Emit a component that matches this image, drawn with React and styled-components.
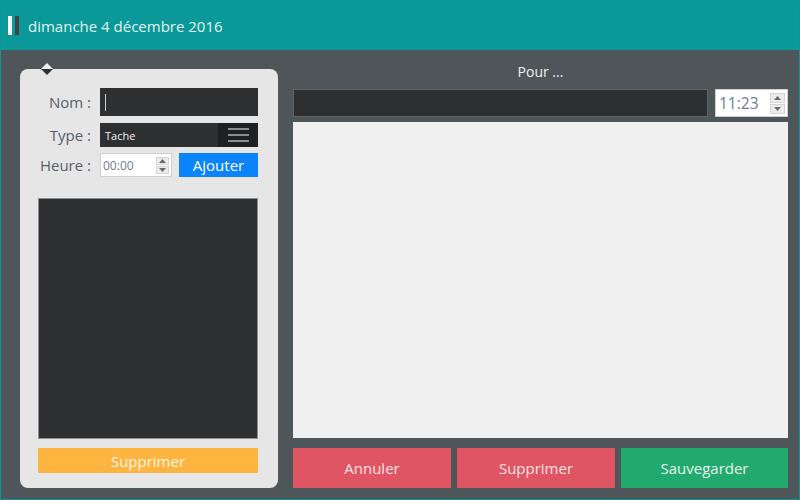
import React from "react";
import styled, { createGlobalStyle } from "styled-components";

const Global = createGlobalStyle`
  html, body { margin: 0; padding: 0; background: #4e5659; }
  * { box-sizing: border-box; }
  body { font-family: "Open Sans", "Noto Sans", sans-serif; }
`;

const Window = styled.div`
  width: 800px;
  height: 500px;
  border: 1px solid #0a9696;
  background: #4e5659;
  display: flex;
  flex-direction: column;
  overflow: hidden;
`;

const Header = styled.header`
  height: 49px;
  flex: none;
  background: #0a9898;
  display: flex;
  align-items: center;
  padding-left: 7px;
  gap: 4px;
  color: #e2f3f2;
  font-size: 15px;
`;

const Bars = styled.div`
  display: flex;
  gap: 3px;
  margin-right: 5px;
  margin-top: -1px;
`;

const Bar = styled.span`
  width: 4px;
  height: 19px;
  background: ${(p) => p.$c};
`;

const Main = styled.main`
  flex: 1;
  display: flex;
  gap: 15px;
  padding: 12px 11px 11px 19px;
  min-height: 0;
`;

const Panel = styled.section`
  position: relative;
  width: 258px;
  flex: none;
  margin-top: 7px;
  background: #e6e6e6;
  border-radius: 8px;
  padding: 19px 20px 15px 18px;
  display: flex;
  flex-direction: column;
`;

const Pointer = styled.svg`
  position: absolute;
  left: 20px;
  top: -7px;
`;

const Form = styled.div`
  display: grid;
  grid-template-columns: 53px 1fr;
  column-gap: 9px;
  row-gap: 6px;
  align-items: center;
`;

const Label = styled.label`
  text-align: right;
  font-size: 15px;
  color: #575e66;
  white-space: nowrap;
  line-height: 20px;
  margin-top: ${(p) => p.$mt || 0}px;
`;

const DarkInput = styled.div`
  height: ${(p) => p.$h}px;
  background: #2d2f31;
  border: ${(p) => (p.$border ? "1px solid #5f6568" : "none")};
  display: flex;
  align-items: center;
  padding-left: 5px;
`;

const Caret = styled.span`
  width: 1px;
  height: 17px;
  background: #cfcfcf;
`;

const Select = styled.div`
  height: 24px;
  margin-top: 1px;
  background: #2d2f31;
  display: flex;
  align-items: stretch;
`;

const SelectText = styled.span`
  flex: 1;
  font-size: 11px;
  color: #f2f2f2;
  padding-left: 5px;
  display: flex;
  align-items: center;
`;

const SelectBtn = styled.span`
  width: 40px;
  background: #1f2022;
  display: flex;
  flex-direction: column;
  justify-content: center;
  align-items: center;
  gap: 4px;
`;

const Line = styled.span`
  width: 21px;
  height: 2px;
  background: #8c8c8c;
`;

const HourRow = styled.div`
  display: flex;
  gap: 7px;
`;

const TimeBox = styled.div`
  width: ${(p) => p.$w}px;
  height: ${(p) => p.$h}px;
  background: #fff;
  border: 1px solid #cfcfcf;
  display: flex;
  align-items: center;
  justify-content: space-between;
  padding: 0 2px 0 ${(p) => p.$pl}px;
  font-size: ${(p) => p.$fs}px;
  color: #6b7c90;
`;

const Spin = styled.div`
  display: flex;
  flex-direction: column;
  gap: 1px;
`;

const SpinBtn = styled.span`
  width: ${(p) => p.$w}px;
  height: ${(p) => p.$h}px;
  background: #ececec;
  border: 1px solid #d4d4d4;
  display: flex;
  align-items: center;
  justify-content: center;
`;

const Button = styled.button`
  border: none;
  margin: 0;
  padding: 0;
  font-family: inherit;
  font-size: 15px;
  background: ${(p) => p.$bg};
  color: ${(p) => p.$fg};
  height: ${(p) => p.$h}px;
  width: ${(p) => (p.$w ? `${p.$w}px` : "auto")};
  display: flex;
  align-items: center;
  justify-content: center;
`;

const List = styled.div`
  flex: 1;
  margin-top: 21px;
  margin-bottom: 9px;
  background: #2d2f31;
  border: 1px solid #8e8e8e;
`;

const Right = styled.section`
  flex: 1;
  display: flex;
  flex-direction: column;
  min-width: 0;
`;

const Title = styled.div`
  height: 20px;
  line-height: 20px;
  text-align: center;
  font-size: 14px;
  color: #f0f0f0;
  margin-bottom: 7px;
`;

const TopRow = styled.div`
  display: flex;
  gap: 7px;
  height: 28px;
`;

const Grow = styled.div`
  flex: 1;
`;

const TextArea = styled.div`
  flex: 1;
  margin: 5px 0 10px;
  background: #f0f0f0;
`;

const Actions = styled.div`
  display: grid;
  grid-template-columns: 158px 158px 1fr;
  gap: 6px;
`;

const Arrow = ({ up }) => (
  <svg width="7" height="4" viewBox="0 0 7 4">
    <path d={up ? "M0 4 L3.5 0 L7 4 Z" : "M0 0 L3.5 4 L7 0 Z"} fill="#6a6a6a" />
  </svg>
);

export default function App() {
  return (
    <>
      <Global />
      <Window>
        <Header>
          <Bars>
            <Bar $c="#f4f4f4" />
            <Bar $c="#3e4548" />
          </Bars>
          dimanche 4 décembre 2016
        </Header>
        <Main>
          <Panel>
            <Pointer width="14" height="14" viewBox="0 0 14 14">
              <path d="M1 7 L7 1 L13 7 Z" fill="#f0f0f0" />
              <path d="M1 7 L7 13 L13 7 Z" fill="#2f3234" />
            </Pointer>
            <Form>
              <Label>Nom :</Label>
              <DarkInput $h={28}>
                <Caret />
              </DarkInput>
              <Label $mt={1}>Type :</Label>
              <Select>
                <SelectText>Tache</SelectText>
                <SelectBtn>
                  <Line />
                  <Line />
                  <Line />
                </SelectBtn>
              </Select>
              <Label>Heure :</Label>
              <HourRow>
                <TimeBox $w={72} $h={24} $pl={2} $fs={12}>
                  00:00
                  <Spin>
                    <SpinBtn $w={13} $h={8}>
                      <Arrow up />
                    </SpinBtn>
                    <SpinBtn $w={13} $h={8}>
                      <Arrow />
                    </SpinBtn>
                  </Spin>
                </TimeBox>
                <Button $bg="#0a84fb" $fg="#ffffff" $h={24} $w={79}>
                  Ajouter
                </Button>
              </HourRow>
            </Form>
            <List />
            <Button $bg="#feb540" $fg="#fff6e6" $h={25}>
              Supprimer
            </Button>
          </Panel>
          <Right>
            <Title>Pour ...</Title>
            <TopRow>
              <Grow>
                <DarkInput $h={28} $border />
              </Grow>
              <TimeBox $w={73} $h={28} $pl={3} $fs={15.5}>
                11:23
                <Spin>
                  <SpinBtn $w={15} $h={10}>
                    <Arrow up />
                  </SpinBtn>
                  <SpinBtn $w={15} $h={10}>
                    <Arrow />
                  </SpinBtn>
                </Spin>
              </TimeBox>
            </TopRow>
            <TextArea />
            <Actions>
              <Button $bg="#e05563" $fg="#f9e1e4" $h={40}>
                Annuler
              </Button>
              <Button $bg="#e05563" $fg="#f9e1e4" $h={40}>
                Supprimer
              </Button>
              <Button $bg="#22aa6e" $fg="#e4f5ec" $h={40}>
                Sauvegarder
              </Button>
            </Actions>
          </Right>
        </Main>
      </Window>
    </>
  );
}
